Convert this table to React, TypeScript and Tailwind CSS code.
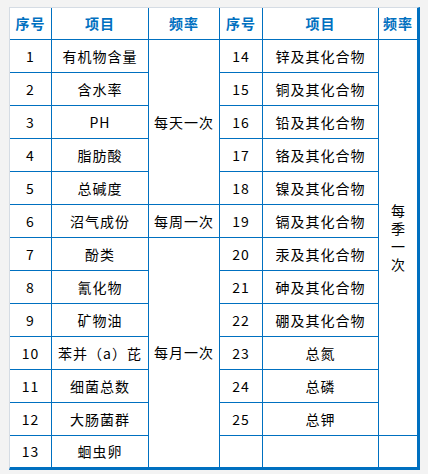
import React from "react";

const left = [
  "有机物含量",
  "含水率",
  "PH",
  "脂肪酸",
  "总碱度",
  "沼气成份",
  "酚类",
  "氰化物",
  "矿物油",
  "苯并（a）芘",
  "细菌总数",
  "大肠菌群",
  "蛔虫卵",
];

const right = [
  "锌及其化合物",
  "铜及其化合物",
  "铅及其化合物",
  "铬及其化合物",
  "镍及其化合物",
  "镉及其化合物",
  "汞及其化合物",
  "砷及其化合物",
  "硼及其化合物",
  "总氮",
  "总磷",
  "总钾",
];

const cell = "flex items-center justify-center border-[#0070c0]";

function Cell({
  children,
  className = "",
}: {
  children?: React.ReactNode;
  className?: string;
}) {
  return <div className={`${cell} ${className}`}>{children}</div>;
}

export default function App() {
  const rows: React.ReactNode[] = [];

  left.forEach((item, i) => {
    const last = i === left.length - 1;
    const b = last ? "border-r" : "border-r border-b";
    rows.push(
      <Cell key={`n${i}`} className={b}>
        {i + 1}
      </Cell>,
      <Cell key={`i${i}`} className={b}>
        {item}
      </Cell>
    );
    if (i === 0)
      rows.push(
        <Cell key="f1" className="row-span-5 border-r border-b">
          每天一次
        </Cell>
      );
    if (i === 5)
      rows.push(
        <Cell key="f2" className="border-r border-b">
          每周一次
        </Cell>
      );
    if (i === 6)
      rows.push(
        <Cell key="f3" className="row-span-7 border-r">
          每月一次
        </Cell>
      );
    rows.push(
      <Cell key={`rn${i}`} className={b}>
        {right[i] ? i + 14 : ""}
      </Cell>,
      <Cell key={`ri${i}`} className={b}>
        {right[i] ?? ""}
      </Cell>
    );
    if (i === 0)
      rows.push(
        <Cell key="q" className="row-span-12 border-b">
          <span className="mt-[4px] leading-none tracking-[4px] [writing-mode:vertical-rl]">
            每季一次
          </span>
        </Cell>
      );
    if (last) rows.push(<Cell key="qe" />);
  });

  return (
    <div className="min-h-screen bg-[#f3f3f3] pl-[9px] pt-[7px] font-['Noto_Sans_CJK_SC','Noto_Sans',sans-serif] text-[14px] text-black">
      <div className="w-fit border-l border-t border-[#d5dce4] border-r-[3px] border-b-[3px] border-r-[#0070c0] border-b-[#0070c0] bg-white">
        <div className="grid grid-cols-[42px_97px_71px_43px_116px_38px] grid-rows-[32px_repeat(12,33px)_31px] tracking-[1px]">
          {["序号", "项目", "频率", "序号", "项目", "频率"].map((h, i) => (
            <Cell
              key={`h${i}`}
              className={`font-bold text-[#0070c0] ${
                i === 5 ? "border-b" : "border-r border-b"
              }`}
            >
              {h}
            </Cell>
          ))}
          {rows}
        </div>
      </div>
    </div>
  );
}
